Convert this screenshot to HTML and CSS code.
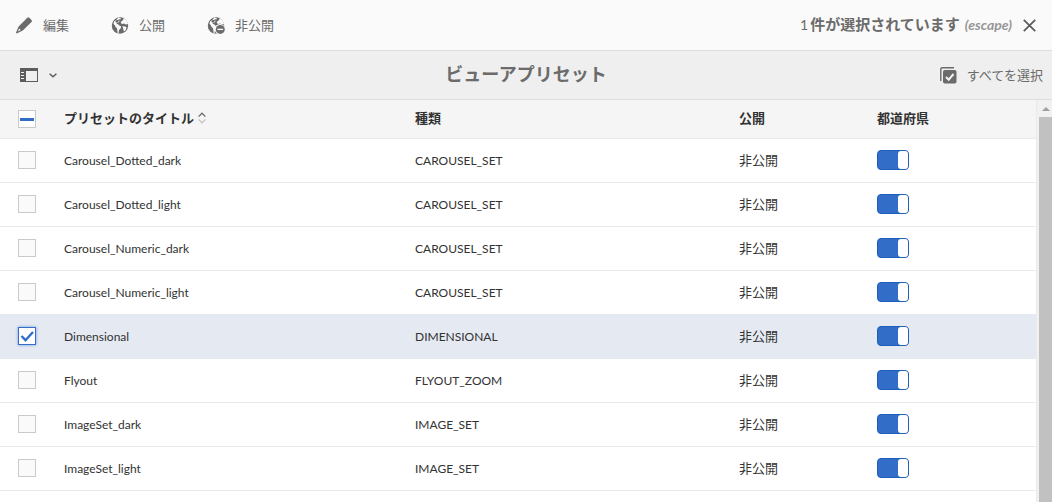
FILE: index.html
```html
<!DOCTYPE html>
<html lang="ja">
<head>
<meta charset="utf-8">
<title>ビューアプリセット</title>
<link rel="stylesheet" href="styles.css">
</head>
<body>
<div class="app">
  <header class="actions">
    <button class="action" type="button">
      <svg class="icon" viewBox="0 0 18 18" aria-hidden="true"><path fill="#6b6b6b" fill-rule="evenodd" d="M12.300 1.800a1.400 1.400 0 0 1 2 0l2.200 2.200a1.400 1.400 0 0 1 0 2L7.800 14.600 1.700 17.400l-.7-.7L3.600 10.500zM4.300 12.500l-1.500 3.100 3-1.500z"/></svg>
      編集</button>
    <button class="action" type="button">
      <svg class="icon" viewBox="0 0 18 18" aria-hidden="true"><circle cx="9" cy="9.500" r="8.200" fill="#6b6b6b"/><path fill="#fafafa" d="M7.200 1.600L9.800 2.300 9.400 3.600 7.800 3.300 7 4.400 8.600 4.900 8 6.300 6.200 6.400 5.600 7.800 7.400 8.400 8.600 9.700 10.200 10.600 9.600 12.600 8 14 7.600 17.300 6.200 16.900 6 13.400 4.400 11.600 4 9.700 2.400 8.300 3 5.600 5.400 4zM12.600 2.200l-.6 2-1.800 1.200-.4 1.500 1.500 1 2-.5 1.500 1.100L17 8l-.7-2.200-1.600-2.400zM11.400 10.200l2.800.2 1.400 1.200-1 2.600-1.700 1.400-.6-2.600z"/><path fill="#6b6b6b" d="M1.400 7.500l2 1.300 1 1.900L6 12.300l.6 4.900-2.300-1-2.500-3zM5 4.300l2.200-.6.6 1.500-2 1.500-1.400-.7z"/></svg>
      公開</button>
    <button class="action" type="button">
      <svg class="icon" viewBox="0 0 18 18" aria-hidden="true"><circle cx="9" cy="9.500" r="8.200" fill="#6b6b6b"/><path fill="#fafafa" d="M7.200 1.600L9.800 2.300 9.400 3.600 7.800 3.300 7 4.400 8.600 4.900 8 6.300 6.200 6.400 5.600 7.800 7.400 8.400 8.600 9.700 9.200 10.600 8 14 7.600 17.300 6.200 16.900 6 13.400 4.400 11.600 4 9.700 2.400 8.300 3 5.600 5.400 4zM12.600 2.200l-.6 2-1.800 1.200-.4 1.500 1.500 1 2-.5 1.500 1.100L17 8l-.7-2.200-1.600-2.400z"/><path fill="#6b6b6b" d="M1.400 7.500l2 1.300 1 1.900L6 12.300l.6 4.900-2.300-1-2.500-3zM5 4.300l2.200-.6.6 1.500-2 1.500-1.400-.7z"/><circle cx="13" cy="13.300" r="5.400" fill="#fafafa"/><circle cx="13.300" cy="13.400" r="4.500" fill="#6b6b6b"/><path stroke="#fafafa" stroke-width="1.300" d="M10.500 13.400h5.600"/></svg>
      非公開</button>
    <p class="status"><span class="number">1</span><span class="count">件が選択されています</span><span class="hint">(escape)</span></p>
    <button class="close" type="button" aria-label="閉じる">
      <svg viewBox="0 0 13 13" aria-hidden="true"><path d="M.8.8l11.400 11.400M12.200.8L.8 12.200" stroke="#5c5c5c" stroke-width="1.800"/></svg>
    </button>
  </header>

  <div class="titlebar">
    <button class="rail" type="button" aria-label="サイドパネル">
      <svg class="rail-icon" viewBox="0 0 18 14" aria-hidden="true"><path fill="#5c5c5c" fill-rule="evenodd" d="M0 0h18v14H0zM6 3h11v10H6zM1 4h3v1H1zM1 7h3v1H1zM1 10h3v1H1z"/></svg>
      <svg class="chevron" viewBox="0 0 8 5" aria-hidden="true"><path d="M.6.800L4 3.800 7.400.8" fill="none" stroke="#5c5c5c" stroke-width="1.500"/></svg>
    </button>
    <h1 class="title">ビューアプリセット</h1>
    <button class="select-all" type="button">
      <svg class="select-icon" viewBox="0 0 17 17" aria-hidden="true"><path d="M.8 14V2A1.200 1.200 0 0 1 2 .8h12" fill="none" stroke="#6b6b6b" stroke-width="1.400"/><rect x="3" y="3" width="13.500" height="13.500" rx="1.800" fill="#6b6b6b"/><path d="M6 10l2.700 2.700L13.500 7" fill="none" stroke="#f2f2f2" stroke-width="2"/></svg>
      すべてを選択</button>
  </div>

  <div class="content">
    <main class="list">
      <table class="presets">
        <colgroup><col class="col-check"><col><col class="col-type"><col class="col-publish"><col class="col-state"></colgroup>
        <thead>
          <tr>
            <th class="pick" scope="col"><input class="check partial" type="checkbox" aria-label="すべてを選択"></th>
            <th scope="col"><button class="sort" type="button">プリセットのタイトル
              <svg class="sort-icon" viewBox="0 0 8 12" aria-hidden="true"><path d="M.6 4.600L4 1.200l3.400 3.400" fill="none" stroke="#6b6b6b" stroke-width="1.300"/><path d="M.6 7.400L4 10.800l3.400-3.400" fill="none" stroke="#c4c4c4" stroke-width="1.300"/></svg></button></th>
            <th scope="col">種類</th>
            <th scope="col">公開</th>
            <th scope="col">都道府県</th>
          </tr>
        </thead>
        <tbody>
          <tr><td class="pick"><input class="check" type="checkbox" aria-labelledby="p1"></td><td class="latin" id="p1">Carousel_Dotted_dark</td><td class="latin">CAROUSEL_SET</td><td>非公開</td><td><input class="switch" type="checkbox" role="switch" checked aria-labelledby="p1"></td></tr>
          <tr><td class="pick"><input class="check" type="checkbox" aria-labelledby="p2"></td><td class="latin" id="p2">Carousel_Dotted_light</td><td class="latin">CAROUSEL_SET</td><td>非公開</td><td><input class="switch" type="checkbox" role="switch" checked aria-labelledby="p2"></td></tr>
          <tr><td class="pick"><input class="check" type="checkbox" aria-labelledby="p3"></td><td class="latin" id="p3">Carousel_Numeric_dark</td><td class="latin">CAROUSEL_SET</td><td>非公開</td><td><input class="switch" type="checkbox" role="switch" checked aria-labelledby="p3"></td></tr>
          <tr class="before-selected"><td class="pick"><input class="check" type="checkbox" aria-labelledby="p4"></td><td class="latin" id="p4">Carousel_Numeric_light</td><td class="latin">CAROUSEL_SET</td><td>非公開</td><td><input class="switch" type="checkbox" role="switch" checked aria-labelledby="p4"></td></tr>
          <tr class="selected"><td class="pick"><input class="check" type="checkbox" checked aria-labelledby="p5"></td><td class="latin" id="p5">Dimensional</td><td class="latin">DIMENSIONAL</td><td>非公開</td><td><input class="switch" type="checkbox" role="switch" checked aria-labelledby="p5"></td></tr>
          <tr><td class="pick"><input class="check" type="checkbox" aria-labelledby="p6"></td><td class="latin" id="p6">Flyout</td><td class="latin">FLYOUT_ZOOM</td><td>非公開</td><td><input class="switch" type="checkbox" role="switch" checked aria-labelledby="p6"></td></tr>
          <tr><td class="pick"><input class="check" type="checkbox" aria-labelledby="p7"></td><td class="latin" id="p7">ImageSet_dark</td><td class="latin">IMAGE_SET</td><td>非公開</td><td><input class="switch" type="checkbox" role="switch" checked aria-labelledby="p7"></td></tr>
          <tr><td class="pick"><input class="check" type="checkbox" aria-labelledby="p8"></td><td class="latin" id="p8">ImageSet_light</td><td class="latin">IMAGE_SET</td><td>非公開</td><td><input class="switch" type="checkbox" role="switch" checked aria-labelledby="p8"></td></tr>
        </tbody>
      </table>
    </main>
    <div class="scrollbar" aria-hidden="true">
      <svg class="scroll-arrow" viewBox="0 0 8 4"><path d="M0 4l4-4 4 4z" fill="#a0a0a0"/></svg>
      <div class="thumb"></div>
    </div>
  </div>
</div>
</body>
</html>
```

FILE: styles.css
```css
* { box-sizing: border-box; }

body {
  margin: 0;
  font: 13px/20px "Noto Sans CJK JP", "Noto Sans", sans-serif;
  color: #323232;
  background: #fff;
}

button {
  display: flex;
  align-items: center;
  padding: 0;
  border: 0;
  background: none;
  font: inherit;
  color: inherit;
}

.app {
  display: flex;
  flex-direction: column;
  height: 100vh;
  overflow: hidden;
}

.actions {
  display: flex;
  align-items: center;
  gap: 42px;
  flex: none;
  height: 51px;
  padding: 0 16px 0 15px;
  border-bottom: 1px solid #dedede;
  background: #fafafa;
  color: #6b6b6b;
}

.action { gap: 10px; }
.icon { width: 18px; height: 18px; }

.status {
  display: flex;
  align-items: baseline;
  margin: 0 -31px 2px auto;
  font-size: 15px;
}

.count { font-weight: 700; }
.number { margin-right: 2px; font-size: 14px; font-family: Lato, sans-serif; }
.hint {
  margin-left: 5px;
  font: italic 700 14px/20px Lato, sans-serif;
  color: #969696;
}
.close svg { display: block; width: 13px; height: 13px; }

.titlebar {
  display: grid;
  grid-template-columns: 1fr auto 1fr;
  align-items: center;
  flex: none;
  height: 49px;
  padding: 0 9px;
  border-bottom: 1px solid #dedede;
  background: #efefef;
  color: #6b6b6b;
}

.rail { gap: 11px; justify-self: start; padding-left: 11px; }
.rail-icon { width: 18px; height: 14px; }
.chevron { width: 8px; height: 5px; }
.title { margin: 0; padding-bottom: 4px; font-size: 18px; line-height: 26px; font-weight: 700; }
.select-all { gap: 10px; justify-self: end; }
.select-icon { width: 17px; height: 17px; }

.content {
  display: flex;
  flex: 1;
  min-height: 0;
  background: #f5f5f5;
}

.list {
  flex: 1;
  overflow: hidden;
  border-right: 1px solid #eaeaea;
  background: #fff;
}

.presets {
  width: 100%;
  table-layout: fixed;
  border-collapse: separate;
  border-spacing: 0;
}

.col-check { width: 64px; }
.col-type { width: 324px; }
.col-publish { width: 138px; }
.col-state { width: 159px; }

th, td {
  height: 44px;
  padding: 0 0 2px;
  border-bottom: 1px solid #eaeaea;
  text-align: left;
  vertical-align: middle;
}

th {
  height: 39px;
  background: #f5f5f5;
  font-weight: 700;
}

.latin { padding-bottom: 0; font-family: Lato, sans-serif; font-size: 12px; }

.pick { padding-left: 18px; }
th.pick { padding-bottom: 0; }
.sort { gap: 4px; }
.sort-icon { width: 8px; height: 12px; }
.selected td { background: #e5eaf2; border-color: #e5eaf2; }
.before-selected td { border-color: #e5eaf2; }

.check {
  appearance: none;
  display: block;
  width: 18px;
  height: 18px;
  margin: 0;
  border: 1px solid #cacaca;
  background: #fafafa;
}

.check:checked {
  border-color: #326ec8;
  background: #fff url("data:image/svg+xml,%3Csvg xmlns='http://www.w3.org/2000/svg' viewBox='0 0 16 16'%3E%3Cpath d='M2.500 8l4 4.200L14 4' fill='none' stroke='%23326ec8' stroke-width='2.400'/%3E%3C/svg%3E") center / 16px 16px no-repeat;
  box-shadow: 0 0 3px #6f9be0;
}

.partial {
  background: linear-gradient(#326ec8, #326ec8) center / 14px 3px no-repeat #fff;
}

.switch {
  appearance: none;
  display: block;
  width: 32px;
  height: 20px;
  margin: 0;
  border: 1px solid #1e5fbe;
  border-radius: 4px;
  background: #326ec8;
}

.switch::before {
  content: "";
  display: block;
  width: 10px;
  height: 18px;
  margin-left: auto;
  border-radius: 3px;
  background: #fff;
}

.scrollbar {
  display: flex;
  flex-direction: column;
  align-items: center;
  gap: 6px;
  flex: none;
  width: 15px;
  padding: 7px 0 0 2px;
  background: #f1f1f1;
}

.scroll-arrow { width: 8px; height: 4px; }
.thumb { flex: 1; width: 100%; background: #c1c1c1; }
```
